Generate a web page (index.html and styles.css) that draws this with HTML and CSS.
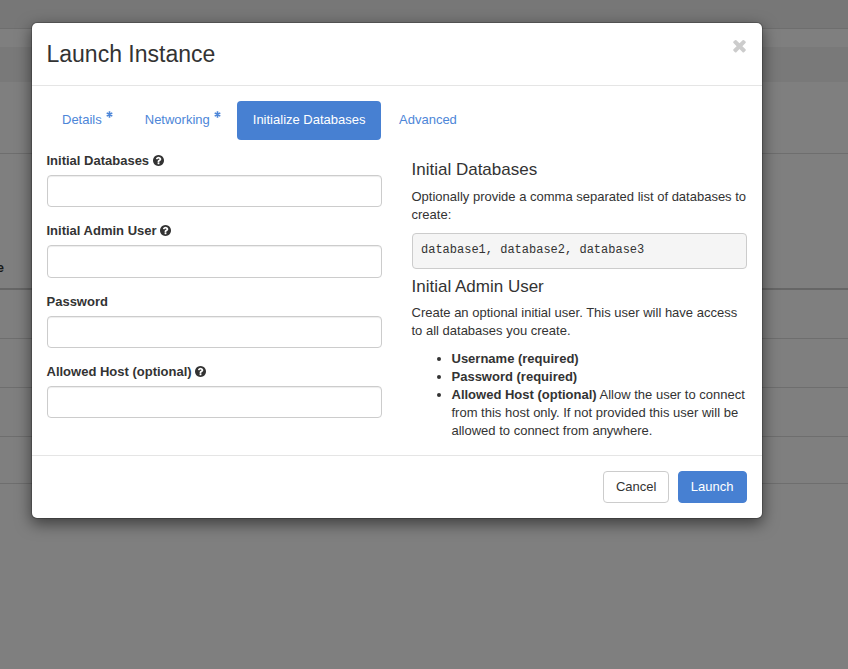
FILE: index.html
```html
<!DOCTYPE html>
<html lang="en">
  <head>
    <meta charset="UTF-8" />
    <meta name="viewport" content="width=device-width, initial-scale=1.0" />
    <title>Launch Instance</title>
    <link rel="stylesheet" href="styles.css">
  </head>
  <body>
    <div class="page">
      <div class="page-top"></div>
      <div class="page-strip"></div>
      <div class="page-band"></div>
      <div class="page-filters"></div>
      <div class="page-head"><div class="head-cell"><span>Name</span></div></div>
      <div class="page-row"></div>
      <div class="page-row"></div>
      <div class="page-row"></div>
      <div class="page-row page-row-last"></div>
    </div>

    <div class="backdrop"></div>

    <div class="modal-wrap">
      <div class="modal">
        <div class="modal-header">
          <h4>Launch Instance</h4>
          <svg class="close" viewBox="0 0 1408 1792"><path d="M1298 1322q0 40-28 68l-136 136q-28 28-68 28t-68-28l-294-294-294 294q-28 28-68 28t-68-28l-136-136q-28-28-28-68t28-68l294-294-294-294q-28-28-28-68t28-68l136-136q28-28 68-28t68 28l294 294 294-294q28-28 68-28t68 28l136 136q28 28 28 68t-28 68l-294 294 294 294q28 28 28 68z"/></svg>
        </div>

        <div class="modal-body">
          <ul class="tabs">
            <li>
              <a href="#">Details<svg class="star" viewBox="0 0 12 12"><path d="M6 .5v11M1.2 3.2l9.6 5.6M10.8 3.2l-9.6 5.6"/></svg></a>
            </li>
            <li>
              <a href="#">Networking<svg class="star" viewBox="0 0 12 12"><path d="M6 .5v11M1.2 3.2l9.6 5.6M10.8 3.2l-9.6 5.6"/></svg></a>
            </li>
            <li class="active"><a href="#">Initialize Databases</a></li>
            <li><a href="#">Advanced</a></li>
          </ul>

          <div class="columns">
            <form class="form-col">
              <div class="form-group">
                <label>Initial Databases
                  <svg class="help" viewBox="0 128 1536 1536"><path d="M896 1376v-192q0-14-9-23t-23-9h-192q-14 0-23 9t-9 23v192q0 14 9 23t23 9h192q14 0 23-9t9-23zm256-672q0-88-55.5-163t-138.5-116-170-41q-243 0-371 213-15 24 8 42l132 100q7 6 19 6 16 0 25-12 53-68 86-92 34-24 86-24 48 0 85.5 26t37.5 59q0 38-20 61t-68 45q-63 28-115.5 86.5t-52.5 125.5v36q0 14 9 23t23 9h192q14 0 23-9t9-23q0-19 21.5-49.5t54.5-49.5q32-18 49-28.5t46-35 44.5-48 28-60.5 12.5-81zm384 192q0 209-103 385.5t-279.5 279.5-385.5 103-385.5-103-279.5-279.5-103-385.5 103-385.5 279.5-279.5 385.5-103 385.5 103 279.5 279.5 103 385.5z"/></svg>
                </label>
                <input type="text">
              </div>
              <div class="form-group">
                <label>Initial Admin User
                  <svg class="help" viewBox="0 128 1536 1536"><path d="M896 1376v-192q0-14-9-23t-23-9h-192q-14 0-23 9t-9 23v192q0 14 9 23t23 9h192q14 0 23-9t9-23zm256-672q0-88-55.5-163t-138.5-116-170-41q-243 0-371 213-15 24 8 42l132 100q7 6 19 6 16 0 25-12 53-68 86-92 34-24 86-24 48 0 85.5 26t37.5 59q0 38-20 61t-68 45q-63 28-115.5 86.5t-52.5 125.5v36q0 14 9 23t23 9h192q14 0 23-9t9-23q0-19 21.5-49.5t54.5-49.5q32-18 49-28.5t46-35 44.5-48 28-60.5 12.5-81zm384 192q0 209-103 385.5t-279.5 279.5-385.5 103-385.5-103-279.5-279.5-103-385.5 103-385.5 279.5-279.5 385.5-103 385.5 103 279.5 279.5 103 385.5z"/></svg>
                </label>
                <input type="text">
              </div>
              <div class="form-group">
                <label>Password</label>
                <input type="password">
              </div>
              <div class="form-group">
                <label>Allowed Host (optional)
                  <svg class="help" viewBox="0 128 1536 1536"><path d="M896 1376v-192q0-14-9-23t-23-9h-192q-14 0-23 9t-9 23v192q0 14 9 23t23 9h192q14 0 23-9t9-23zm256-672q0-88-55.5-163t-138.5-116-170-41q-243 0-371 213-15 24 8 42l132 100q7 6 19 6 16 0 25-12 53-68 86-92 34-24 86-24 48 0 85.5 26t37.5 59q0 38-20 61t-68 45q-63 28-115.5 86.5t-52.5 125.5v36q0 14 9 23t23 9h192q14 0 23-9t9-23q0-19 21.5-49.5t54.5-49.5q32-18 49-28.5t46-35 44.5-48 28-60.5 12.5-81zm384 192q0 209-103 385.5t-279.5 279.5-385.5 103-385.5-103-279.5-279.5-103-385.5 103-385.5 279.5-279.5 385.5-103 385.5 103 279.5 279.5 103 385.5z"/></svg>
                </label>
                <input type="text">
              </div>
            </form>

            <div class="help-col">
              <h3>Initial Databases</h3>
              <p>Optionally provide a comma separated list of databases to create:</p>
              <pre>database1, database2, database3</pre>
              <h3>Initial Admin User</h3>
              <p>Create an optional initial user. This user will have access to all databases you create.</p>
              <ul>
                <li><strong>Username (required)</strong></li>
                <li><strong>Password (required)</strong></li>
                <li><strong>Allowed Host (optional)</strong> Allow the user to connect from this host only. If not provided this user will be allowed to connect from anywhere.</li>
              </ul>
            </div>
          </div>
        </div>

        <div class="modal-footer">
          <button class="btn">Cancel</button>
          <button class="btn btn-primary">Launch</button>
        </div>
      </div>
    </div>
  </body>
</html>
```

FILE: styles.css
```css
* {
  box-sizing: border-box;
}
html,
body {
  height: 100%;
}
body {
  position: relative;
  margin: 0;
  overflow: hidden;
  font-family: "Liberation Sans", Arial, sans-serif;
  font-size: 13px;
  line-height: 1.42857;
  color: #333;
  background-color: #fff;
}

/* page behind the dialog */
.page-top {
  height: 29px;
  background-color: #eee;
  border-bottom: 1px solid #ddd;
}
.page-strip {
  height: 18px;
}
.page-band {
  height: 35px;
  background-color: #f2f2f2;
}
.page-filters {
  height: 72px;
  border-bottom: 1px solid #ddd;
}
.page-head {
  height: 136px;
  border-bottom: 2px solid #ccc;
  display: flex;
  align-items: flex-end;
  padding-bottom: 10px;
}
.head-cell {
  width: 4px;
  overflow: hidden;
  display: flex;
  justify-content: flex-end;
  font-weight: bold;
}
.page-row {
  height: 49px;
  border-bottom: 1px solid #ddd;
}
.page-row-last {
  height: 47px;
}
.backdrop {
  position: absolute;
  top: 0;
  right: 0;
  bottom: 0;
  left: 0;
  background-color: rgba(0, 0, 0, 0.5);
}

/* dialog */
.modal-wrap {
  position: absolute;
  top: 22px;
  left: 30.5px;
}
.modal {
  width: 732px;
  background-color: #fff;
  background-clip: padding-box;
  border: 1px solid rgba(0, 0, 0, 0.2);
  border-radius: 6px;
  box-shadow: 0 5px 15px rgba(0, 0, 0, 0.5);
}
.modal-header {
  display: flex;
  justify-content: space-between;
  align-items: flex-start;
  height: 63px;
  padding: 15px;
  border-bottom: 1px solid #e5e5e5;
}
.modal-header h4 {
  margin: 0;
  font-size: 23px;
  font-weight: normal;
  line-height: 32px;
}
.close {
  width: 15px;
  height: 19px;
  margin-top: -2px;
  fill: #ccc;
}
.modal-body {
  padding: 15px;
}

.tabs {
  display: flex;
  gap: 2px;
  list-style: none;
  margin: 0 0 12.43px;
  padding: 0 0 0 0.5px;
}
.tabs .active {
  margin-left: -0.5px;
}
.tabs li + li + li + li {
  margin-left: 1px;
}
.tabs a {
  display: block;
  padding: 10px 15px;
  border-radius: 4px;
  color: #4d86d8;
  text-decoration: none;
}
.tabs .active a {
  padding: 10px 15.5px;
  background-color: #4780d2;
  color: #fff;
}
.star {
  width: 7px;
  height: 7px;
  margin-left: 4px;
  vertical-align: 6px;
  stroke: #4d86d8;
  stroke-width: 2.8;
  fill: none;
}

.columns {
  display: grid;
  grid-template-columns: 335px 335px;
  gap: 30px;
}
.form-group {
  margin-bottom: 14.84px;
}
.form-group label {
  display: block;
  margin-bottom: 4.36px;
  font-weight: bold;
}
.form-group input {
  display: block;
  width: 100%;
  height: 32.57px;
  padding: 6px 12px;
  border: 1px solid #ccc;
  border-radius: 4px;
  background-color: #fff;
  box-shadow: inset 0 1px 1px rgba(0, 0, 0, 0.075);
}
.help {
  width: 11px;
  height: 11px;
  vertical-align: -1px;
  fill: #333;
}

.help-col h3 {
  margin: 9.5px 0 7.5px;
  font-size: 17px;
  font-weight: normal;
  line-height: 1.1;
}
.help-col pre + h3 {
  margin-top: 9px;
  margin-bottom: 8px;
}
.help-col p {
  margin: 0 0 9px;
  line-height: 18px;
}
.help-col pre {
  margin: 0;
  height: 36px;
  padding: 8px 8.5px;
  font-family: "Liberation Mono", "Courier New", monospace;
  font-size: 12px;
  line-height: 17px;
  background-color: #f5f5f5;
  border: 1px solid #ccc;
  border-radius: 4px;
}
.help-col ul {
  margin: 10px 0 0;
  padding-left: 40px;
  line-height: 18px;
}

.modal-footer {
  display: flex;
  justify-content: flex-end;
  gap: 8.5px;
  padding: 15px;
  border-top: 1px solid #e5e5e5;
}
.btn {
  height: 32px;
  padding: 6px 12px;
  font-family: inherit;
  font-size: 13px;
  line-height: 18px;
  color: #333;
  background-color: #fff;
  border: 1px solid #ccc;
  border-radius: 4px;
}
.btn-primary {
  color: #fff;
  background-color: #4780d2;
  border-color: #4780d2;
}
```
